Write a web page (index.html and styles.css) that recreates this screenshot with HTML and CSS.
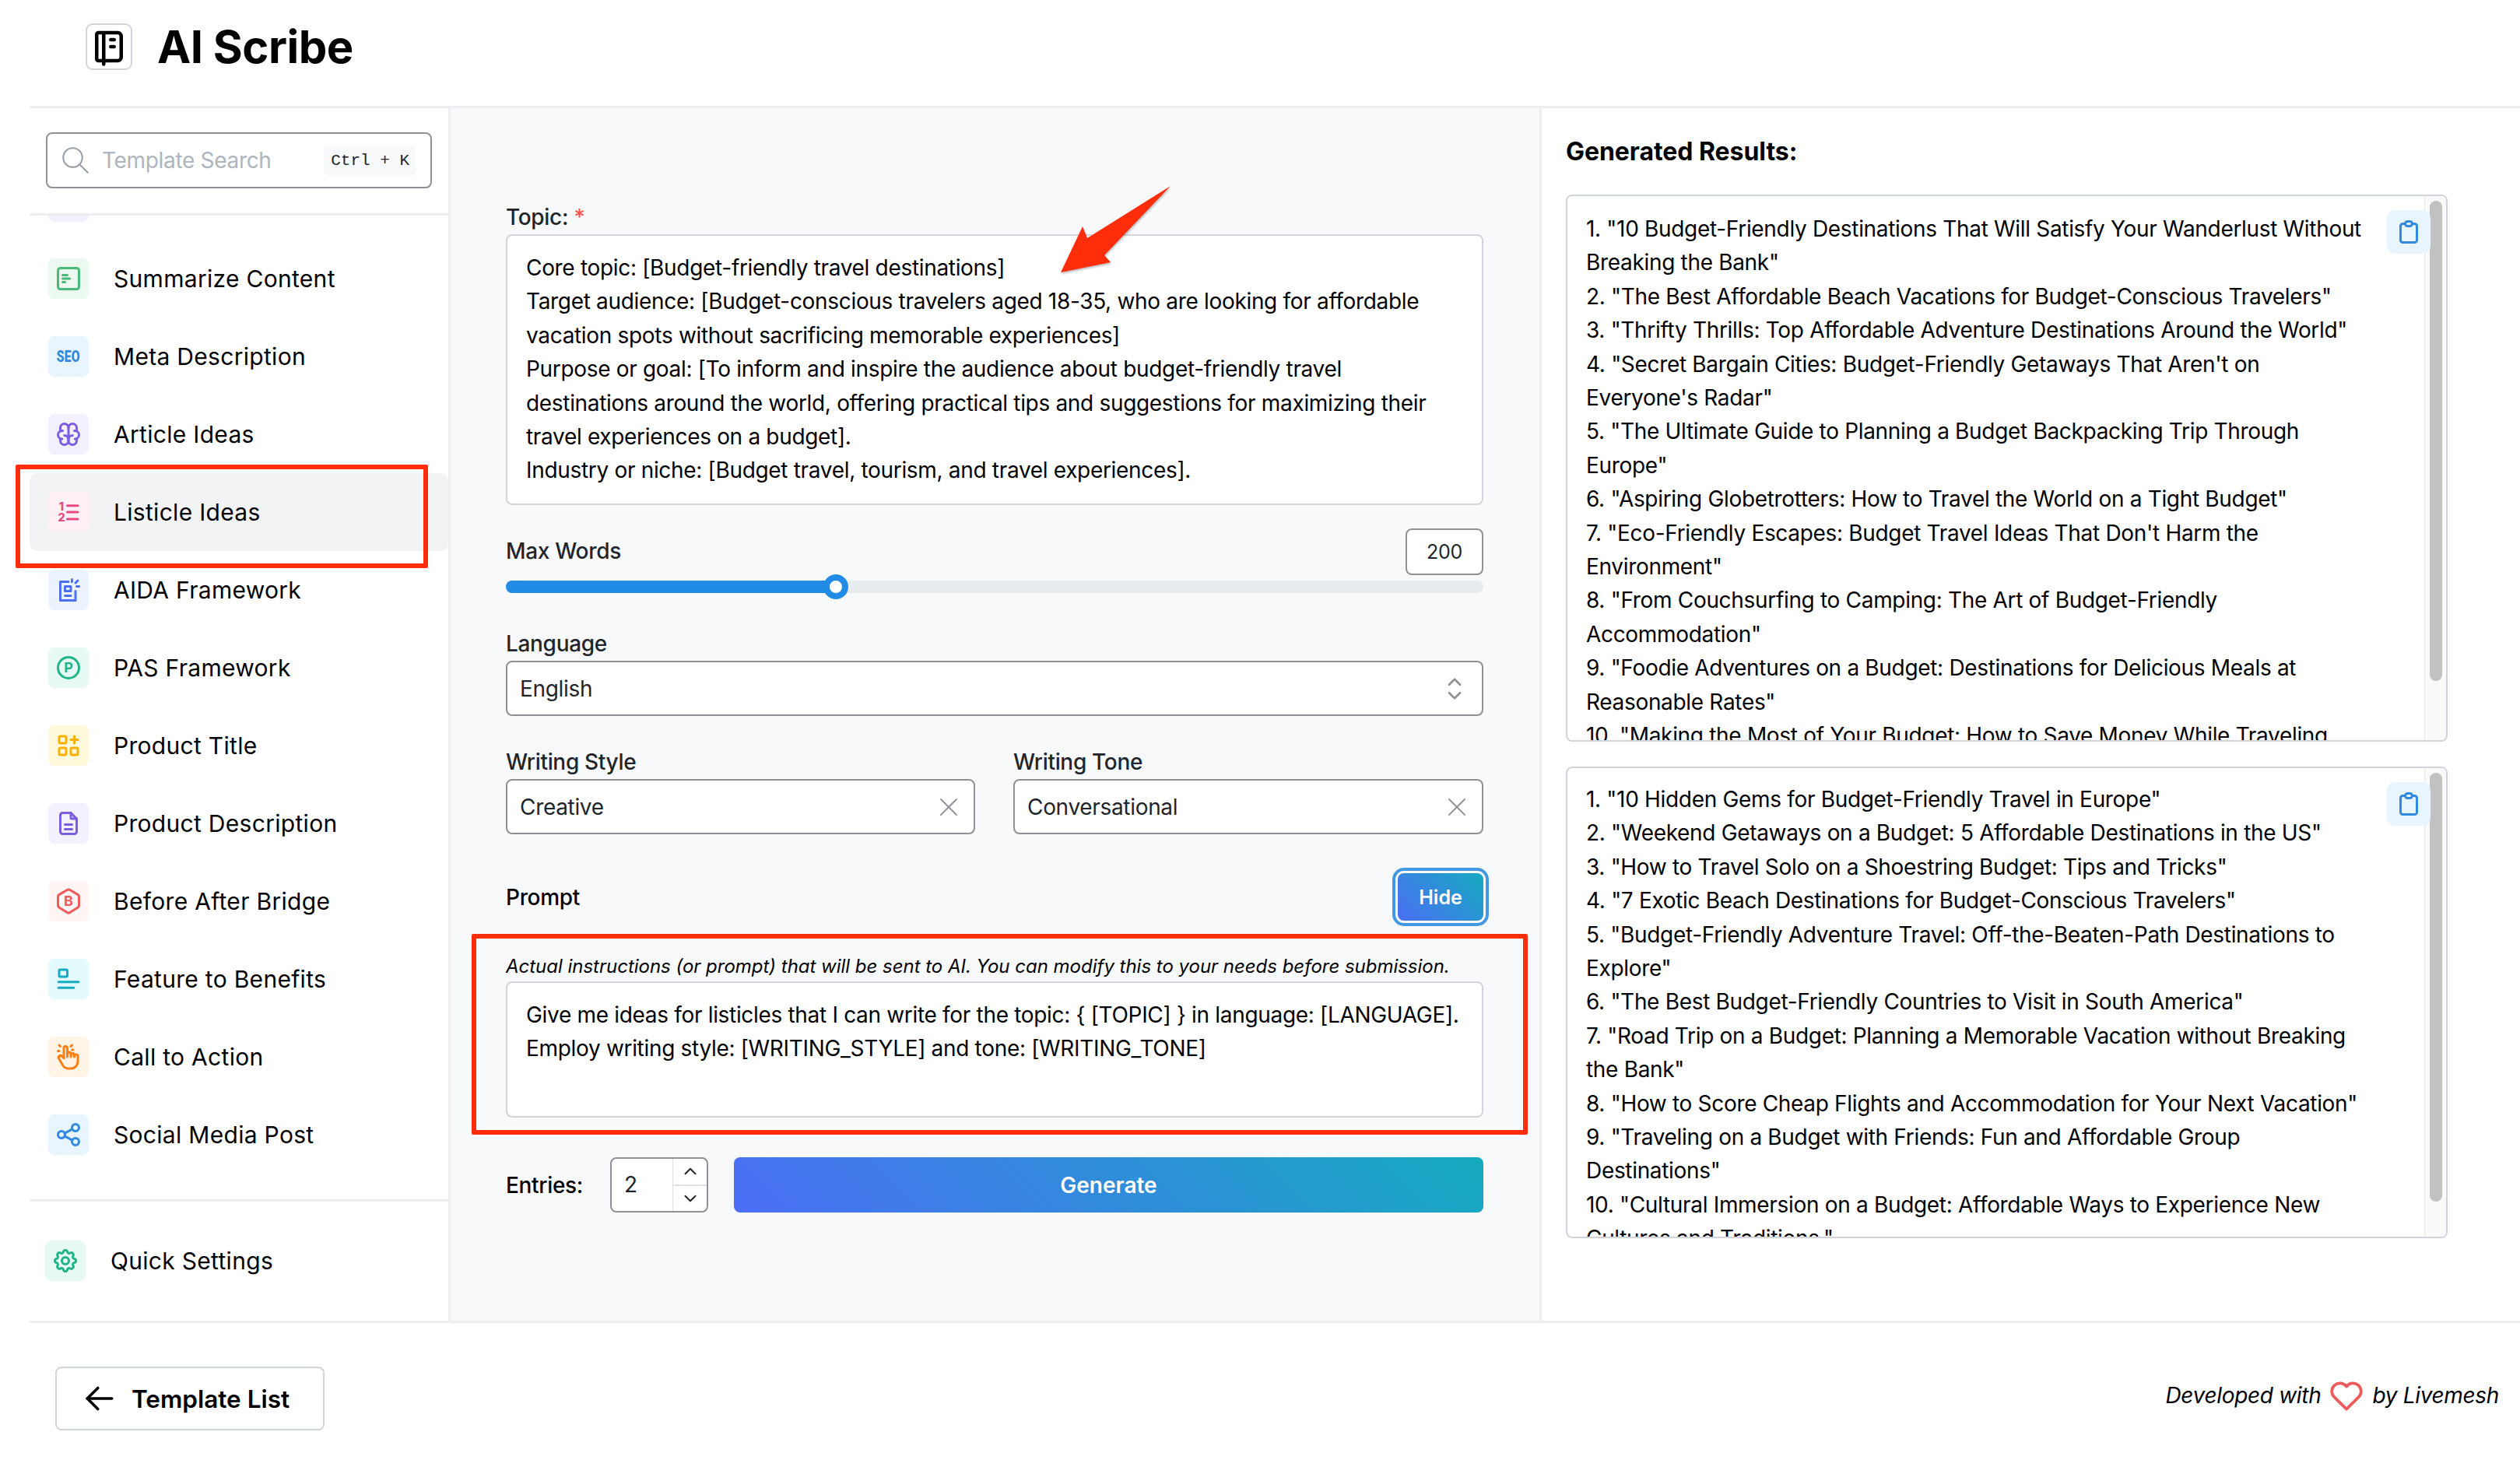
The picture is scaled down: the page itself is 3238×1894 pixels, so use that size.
FILE: index.html
```html
<!DOCTYPE html>
<html lang="en">
<head>
    <meta charset="UTF-8">
    <meta name="viewport" content="width=device-width, initial-scale=1.0">
    <title>AI Scribe</title>
    <link rel="stylesheet" href="styles.css">
</head>
<body>
    <div class="app">
        <header class="topbar">
            <div class="logo-box">
                <svg class="ico logo-ico" viewBox="0 0 24 24"><path d="M6 4h11a2 2 0 0 1 2 2v12a2 2 0 0 1 -2 2h-11a1 1 0 0 1 -1 -1v-14a1 1 0 0 1 1 -1m3 0v18"/><path d="M13 8h2"/><path d="M13 12h2"/></svg>
            </div>
            <h1>AI Scribe</h1>
        </header>

        <div class="content">
            <aside class="sidebar">
                <div class="search-wrap">
                    <div class="search">
                        <svg class="ico search-ico" viewBox="0 0 24 24"><circle cx="10" cy="10" r="7"/><path d="M21 21l-6 -6"/></svg>
                        <span class="search-text">Template Search</span>
                        <span class="kbd">Ctrl + K</span>
                    </div>
                </div>

                <nav class="nav-list">
                    <div class="peek"></div>
                    <a class="nav-item">
                        <span class="tile green"><svg class="ico" viewBox="0 0 24 24"><path d="M3 5a2 2 0 0 1 2 -2h14a2 2 0 0 1 2 2v14a2 2 0 0 1 -2 2h-14a2 2 0 0 1 -2 -2z"/><path d="M9 15h-2"/><path d="M13 12h-6"/><path d="M11 9h-4"/></svg></span>
                        Summarize Content
                    </a>
                    <a class="nav-item">
                        <span class="tile blue"><span class="seo">SEO</span></span>
                        Meta Description
                    </a>
                    <a class="nav-item">
                        <span class="tile purple"><svg class="ico" viewBox="0 0 24 24"><path d="M15.5 13a3.5 3.5 0 0 0 -3.5 3.5v1a3.5 3.5 0 0 0 7 0v-1.8"/><path d="M8.5 13a3.5 3.5 0 0 1 3.5 3.5v1a3.5 3.5 0 0 1 -7 0v-1.8"/><path d="M17.5 16a3.5 3.5 0 0 0 0 -7h-.5"/><path d="M19 9.3v-2.8a3.5 3.5 0 0 0 -7 0"/><path d="M6.5 16a3.5 3.5 0 0 1 0 -7h.5"/><path d="M5 9.3v-2.8a3.5 3.5 0 0 1 7 0v10"/></svg></span>
                        Article Ideas
                    </a>
                    <a class="nav-item active">
                        <span class="tile pink"><svg class="ico" viewBox="0 0 24 24"><path d="M11 6.5h9"/><path d="M11 12h9"/><path d="M11 18h9"/><text x="6" y="10.6" class="ico-letter small">1</text><text x="6" y="20" class="ico-letter small">2</text></svg></span>
                        Listicle Ideas
                    </a>
                    <a class="nav-item">
                        <span class="tile indigo"><svg class="ico" viewBox="0 0 24 24"><path d="M11.933 5h-6.933v16h13v-8"/><path d="M14 17h-5"/><path d="M9 13h5v-4h-5z"/><path d="M15 5v-2"/><path d="M18 6l2 -2"/><path d="M19 9h2"/></svg></span>
                        AIDA Framework
                    </a>
                    <a class="nav-item">
                        <span class="tile teal"><svg class="ico" viewBox="0 0 24 24"><circle cx="12" cy="12" r="9"/><text x="12" y="16.2" class="ico-letter">P</text></svg></span>
                        PAS Framework
                    </a>
                    <a class="nav-item">
                        <span class="tile yellow"><svg class="ico" viewBox="0 0 24 24"><path d="M4 5a1 1 0 0 1 1 -1h4a1 1 0 0 1 1 1v4a1 1 0 0 1 -1 1h-4a1 1 0 0 1 -1 -1z"/><path d="M4 15a1 1 0 0 1 1 -1h4a1 1 0 0 1 1 1v4a1 1 0 0 1 -1 1h-4a1 1 0 0 1 -1 -1z"/><path d="M14 15a1 1 0 0 1 1 -1h4a1 1 0 0 1 1 1v4a1 1 0 0 1 -1 1h-4a1 1 0 0 1 -1 -1z"/><path d="M14 7h6"/><path d="M17 4v6"/></svg></span>
                        Product Title
                    </a>
                    <a class="nav-item">
                        <span class="tile purple"><svg class="ico" viewBox="0 0 24 24"><path d="M14 3v4a1 1 0 0 0 1 1h4"/><path d="M17 21h-10a2 2 0 0 1 -2 -2v-14a2 2 0 0 1 2 -2h7l5 5v11a2 2 0 0 1 -2 2z"/><path d="M9 17h6"/><path d="M9 13h6"/></svg></span>
                        Product Description
                    </a>
                    <a class="nav-item">
                        <span class="tile red"><svg class="ico" viewBox="0 0 24 24"><path d="M19.875 6.27a2.225 2.225 0 0 1 1.125 1.948v7.284c0 .809 -.443 1.555 -1.158 1.948l-6.75 4.27a2.269 2.269 0 0 1 -2.184 0l-6.75 -4.27a2.225 2.225 0 0 1 -1.158 -1.948v-7.285c0 -.809 .443 -1.554 1.158 -1.947l6.75 -3.98a2.33 2.33 0 0 1 2.25 0l6.75 3.98h-.033z"/><text x="12" y="16.2" class="ico-letter">B</text></svg></span>
                        Before After Bridge
                    </a>
                    <a class="nav-item">
                        <span class="tile cyan"><svg class="ico" viewBox="0 0 24 24"><rect x="4" y="4" width="7" height="6" rx="1"/><path d="M3.5 14.5h17"/><path d="M3.5 19.5h13"/></svg></span>
                        Feature to Benefits
                    </a>
                    <a class="nav-item">
                        <span class="tile orange"><svg class="ico" viewBox="0 0 24 24"><path d="M8 13v-8.5a1.5 1.5 0 0 1 3 0v7.5"/><path d="M11 11.5v-2a1.5 1.5 0 0 1 3 0v2.5"/><path d="M14 10.5a1.5 1.5 0 0 1 3 0v1.5"/><path d="M17 11.5a1.5 1.5 0 0 1 3 0v4.5a6 6 0 0 1 -6 6h-2h.208a6 6 0 0 1 -5.012 -2.7l-.196 -.3c-.312 -.479 -1.407 -2.388 -3.286 -5.728a1.5 1.5 0 0 1 .536 -2.022a1.867 1.867 0 0 1 2.28 .28l1.47 1.47"/><path d="M5 3l-1 -1"/><path d="M4 7h-1"/><path d="M14 3l1 -1"/><path d="M15 6h1"/></svg></span>
                        Call to Action
                    </a>
                    <a class="nav-item">
                        <span class="tile blue"><svg class="ico" viewBox="0 0 24 24"><circle cx="6" cy="12" r="3"/><circle cx="18" cy="6" r="3"/><circle cx="18" cy="18" r="3"/><path d="M8.7 10.7l6.6 -3.4"/><path d="M8.7 13.3l6.6 3.4"/></svg></span>
                        Social Media Post
                    </a>
                </nav>

                <div class="quick">
                    <a class="nav-item quick-item">
                        <span class="tile teal"><svg class="ico" viewBox="0 0 24 24"><path d="M10.325 4.317c.426 -1.756 2.924 -1.756 3.35 0a1.724 1.724 0 0 0 2.573 1.066c1.543 -.94 3.31 .826 2.37 2.37a1.724 1.724 0 0 0 1.065 2.572c1.756 .426 1.756 2.924 0 3.35a1.724 1.724 0 0 0 -1.066 2.573c.94 1.543 -.826 3.31 -2.37 2.37a1.724 1.724 0 0 0 -2.572 1.065c-.426 1.756 -2.924 1.756 -3.35 0a1.724 1.724 0 0 0 -2.573 -1.066c-1.543 .94 -3.31 -.826 -2.37 -2.37a1.724 1.724 0 0 0 -1.065 -2.572c-1.756 -.426 -1.756 -2.924 0 -3.35a1.724 1.724 0 0 0 1.066 -2.573c-.94 -1.543 .826 -3.31 2.37 -2.37c1 .608 2.296 .07 2.572 -1.065z"/><circle cx="12" cy="12" r="3"/></svg></span>
                        Quick Settings
                    </a>
                </div>
            </aside>

            <main class="form-panel">
                <label class="label">Topic: <span class="req">*</span></label>
                <div class="textbox topic-box">Core topic: [Budget-friendly travel destinations]
Target audience: [Budget-conscious travelers aged 18-35, who are looking for affordable
vacation spots without sacrificing memorable experiences]
Purpose or goal: [To inform and inspire the audience about budget-friendly travel
destinations around the world, offering practical tips and suggestions for maximizing their
travel experiences on a budget].
Industry or niche: [Budget travel, tourism, and travel experiences].</div>

                <div class="words-row">
                    <label class="label">Max Words</label>
                    <div class="words-num">200</div>
                </div>
                <div class="slider">
                    <div class="slider-fill"></div>
                    <div class="slider-thumb"></div>
                </div>

                <label class="label language-label">Language</label>
                <div class="field">
                    English
                    <svg class="ico selector-ico" viewBox="0 0 24 24"><path d="M8 9l4 -4l4 4"/><path d="M16 15l-4 4l-4 -4"/></svg>
                </div>

                <div class="two-col">
                    <div>
                        <label class="label">Writing Style</label>
                        <div class="field">
                            Creative
                            <svg class="ico clear-ico" viewBox="0 0 24 24"><path d="M18 6l-12 12"/><path d="M6 6l12 12"/></svg>
                        </div>
                    </div>
                    <div>
                        <label class="label">Writing Tone</label>
                        <div class="field">
                            Conversational
                            <svg class="ico clear-ico" viewBox="0 0 24 24"><path d="M18 6l-12 12"/><path d="M6 6l12 12"/></svg>
                        </div>
                    </div>
                </div>

                <div class="prompt-row">
                    <label class="label prompt-label">Prompt</label>
                    <button class="hide-btn">Hide</button>
                </div>

                <p class="note">Actual instructions (or prompt) that will be sent to AI. You can modify this to your needs before submission.</p>
                <div class="textbox prompt-box">Give me ideas for listicles that I can write for the topic: { [TOPIC] } in language: [LANGUAGE].
Employ writing style: [WRITING_STYLE] and tone: [WRITING_TONE]</div>

                <div class="generate-row">
                    <label class="label entries-label">Entries:</label>
                    <div class="stepper">
                        <span class="stepper-val">2</span>
                        <div class="stepper-btns">
                            <span><svg class="ico" viewBox="0 0 24 24"><path d="M6 15l6 -6l6 6"/></svg></span>
                            <span><svg class="ico" viewBox="0 0 24 24"><path d="M6 9l6 6l6 -6"/></svg></span>
                        </div>
                    </div>
                    <button class="generate-btn">Generate</button>
                </div>
            </main>

            <section class="results">
                <h2>Generated Results:</h2>
                <div class="result-box box-one">
                    <div class="result-text">1. "10 Budget-Friendly Destinations That Will Satisfy Your Wanderlust Without
Breaking the Bank"
2. "The Best Affordable Beach Vacations for Budget-Conscious Travelers"
3. "Thrifty Thrills: Top Affordable Adventure Destinations Around the World"
4. "Secret Bargain Cities: Budget-Friendly Getaways That Aren't on
Everyone's Radar"
5. "The Ultimate Guide to Planning a Budget Backpacking Trip Through
Europe"
6. "Aspiring Globetrotters: How to Travel the World on a Tight Budget"
7. "Eco-Friendly Escapes: Budget Travel Ideas That Don't Harm the
Environment"
8. "From Couchsurfing to Camping: The Art of Budget-Friendly
Accommodation"
9. "Foodie Adventures on a Budget: Destinations for Delicious Meals at
Reasonable Rates"
10. "Making the Most of Your Budget: How to Save Money While Traveling</div>
                    <div class="scrollbar"><div class="scroll-thumb"></div></div>
                    <button class="copy-btn"><svg class="ico" viewBox="0 0 24 24"><path d="M9 5h-2a2 2 0 0 0 -2 2v12a2 2 0 0 0 2 2h10a2 2 0 0 0 2 -2v-12a2 2 0 0 0 -2 -2h-2"/><rect x="9" y="3" width="6" height="4" rx="2"/></svg></button>
                </div>
                <div class="result-box box-two">
                    <div class="result-text">1. "10 Hidden Gems for Budget-Friendly Travel in Europe"
2. "Weekend Getaways on a Budget: 5 Affordable Destinations in the US"
3. "How to Travel Solo on a Shoestring Budget: Tips and Tricks"
4. "7 Exotic Beach Destinations for Budget-Conscious Travelers"
5. "Budget-Friendly Adventure Travel: Off-the-Beaten-Path Destinations to
Explore"
6. "The Best Budget-Friendly Countries to Visit in South America"
7. "Road Trip on a Budget: Planning a Memorable Vacation without Breaking
the Bank"
8. "How to Score Cheap Flights and Accommodation for Your Next Vacation"
9. "Traveling on a Budget with Friends: Fun and Affordable Group
Destinations"
10. "Cultural Immersion on a Budget: Affordable Ways to Experience New
Cultures and Traditions."</div>
                    <div class="scrollbar"><div class="scroll-thumb"></div></div>
                    <button class="copy-btn"><svg class="ico" viewBox="0 0 24 24"><path d="M9 5h-2a2 2 0 0 0 -2 2v12a2 2 0 0 0 2 2h10a2 2 0 0 0 2 -2v-12a2 2 0 0 0 -2 -2h-2"/><rect x="9" y="3" width="6" height="4" rx="2"/></svg></button>
                </div>
            </section>
        </div>

        <footer class="footer">
            <button class="back-btn">
                <svg class="ico" viewBox="0 0 24 24"><path d="M5 12h14"/><path d="M5 12l6 6"/><path d="M5 12l6 -6"/></svg>
                Template List
            </button>
            <div class="credit">
                Developed with
                <svg class="ico" viewBox="0 0 24 24"><path d="M19.5 12.572l-7.5 7.428l-7.5 -7.428a5 5 0 1 1 7.5 -6.566a5 5 0 1 1 7.5 6.572"/></svg>
                by Livemesh
            </div>
        </footer>
    </div>

    <!-- red markup drawn on top of the screenshot -->
    <div class="mark mark-nav"></div>
    <div class="mark mark-prompt"></div>
    <svg class="mark-arrow" viewBox="1350 230 170 130"><polygon points="1363,350 1391,291 1397,306 1504,239 1419,328 1427,337"/></svg>
</body>
</html>
```

FILE: styles.css
```css
* {
    box-sizing: border-box;
    margin: 0;
    padding: 0;
}

body {
    font-family: Inter, "Noto Sans", sans-serif;
    font-size: 28px;
    letter-spacing: -0.32px;
    color: #000;
    background: #fff;
    height: 100vh;
    position: relative;
    overflow: hidden;
}

.ico {
    fill: none;
    stroke: currentColor;
    stroke-width: 2;
    stroke-linecap: round;
    stroke-linejoin: round;
}

.ico-letter {
    fill: currentColor;
    stroke: none;
    font-family: Inter, sans-serif;
    font-size: 12px;
    font-weight: 700;
    text-anchor: middle;
    letter-spacing: 0;
}

.ico-letter.small {
    font-size: 9.5px;
    font-weight: 800;
}

.app {
    height: 100%;
    margin-left: 38px;
    display: flex;
    flex-direction: column;
}

/* top bar */
.topbar {
    height: 139px;
    flex: none;
    padding: 0 0 17px 72px;
    display: flex;
    align-items: center;
    gap: 32px;
    border-bottom: 3px solid #eceef1;
}

.logo-box {
    width: 60px;
    height: 60px;
    border: 2px solid #d1d5db;
    border-radius: 9px;
    display: flex;
    align-items: center;
    justify-content: center;
}

.logo-ico {
    width: 54px;
    height: 54px;
    stroke-width: 2;
}

h1 {
    font-size: 58px;
    font-weight: 700;
    line-height: 1;
    letter-spacing: -0.5px;
}

.content {
    flex: 1;
    display: flex;
    min-height: 0;
}

/* sidebar */
.sidebar {
    width: 541px;
    flex: none;
    border-right: 3px solid #eceef1;
    display: flex;
    flex-direction: column;
}

.search-wrap {
    height: 138px;
    flex: none;
    padding: 31px 21px 0 21px;
    border-bottom: 3px solid #eceef1;
}

.search {
    height: 72px;
    border: 2px solid #8f9196;
    border-radius: 8px;
    padding: 0 18px 0 15px;
    display: flex;
    align-items: center;
    color: #adb5bd;
}

.search-ico {
    width: 42px;
    height: 42px;
    stroke-width: 1.2;
    flex: none;
    margin-right: 13px;
    color: #9aa0a8;
}

.search-text {
    flex: 1;
}

.kbd {
    height: 38px;
    padding: 0 9px;
    background: #f8f9fa;
    border-radius: 6px;
    display: flex;
    align-items: center;
    color: #212529;
    font-family: "Liberation Mono", monospace;
    font-size: 21px;
    letter-spacing: 0;
}

.nav-list {
    flex: none;
    height: 1264px;
    overflow: hidden;
}

.peek {
    width: 52px;
    height: 8px;
    margin: 0 0 23px 24px;
    background: #f3f0ff;
    border-radius: 0 0 10px 10px;
}

.nav-item {
    height: 100px;
    padding-left: 24px;
    display: flex;
    align-items: center;
    gap: 32px;
    border-radius: 10px;
    font-size: 30px;
    letter-spacing: 0.3px;
}

.nav-item.active {
    background: #f2f3f5;
}

.tile {
    width: 52px;
    height: 52px;
    flex: none;
    border-radius: 8px;
    display: flex;
    align-items: center;
    justify-content: center;
}

.tile svg {
    width: 36px;
    height: 36px;
}

.green { background: #ebf9f0; color: #48bb78; }
.blue { background: #e8f4fe; color: #2f8ae0; }
.purple { background: #f3f0ff; color: #7c5ce0; }
.pink { background: #fff0f6; color: #e64980; }
.indigo { background: #edf2ff; color: #4c6ef5; }
.teal { background: #e6faf3; color: #1fb585; }
.yellow { background: #fff9db; color: #fab005; }
.red { background: #fff5f5; color: #f05a5a; }
.cyan { background: #e3fafc; color: #15aabf; }
.orange { background: #fff4e6; color: #fd7e14; }

.seo {
    font-family: Roboto, sans-serif;
    font-size: 20px;
    font-weight: 900;
    letter-spacing: 0;
    transform: scaleX(0.8);
}

.quick {
    flex: 1;
    border-top: 3px solid #eceef1;
    padding-bottom: 2px;
    display: flex;
    align-items: center;
}

.quick-item {
    padding-left: 20px;
}

/* form column */
.form-panel {
    width: 1402px;
    flex: none;
    padding: 122px 72px 0 71px;
    background: #f8f9fb;
    border-right: 3px solid #eceef1;
}

.label {
    display: block;
    height: 36px;
    line-height: 36px;
    margin-bottom: 4px;
    font-weight: 500;
    color: #212529;
    white-space: nowrap;
}

.req {
    color: #fa5252;
}

.textbox {
    background: #fff;
    border: 2px solid #d1d5db;
    border-radius: 8px;
    padding: 20px 24px;
    line-height: 43.4px;
    white-space: pre;
}

.topic-box {
    height: 348px;
}

.words-row {
    margin-top: 30px;
    display: flex;
    justify-content: space-between;
    align-items: flex-end;
}

.words-row .label {
    margin-bottom: 13px;
}

.words-num {
    width: 100px;
    height: 60px;
    background: #fff;
    border: 2px solid #8f9196;
    border-radius: 8px;
    font-size: 25px;
    color: #212529;
    display: flex;
    align-items: center;
    justify-content: center;
}

.slider {
    position: relative;
    height: 16px;
    margin-top: 7px;
    background: #e9ecef;
    border-radius: 8px;
}

.slider-fill {
    width: 425px;
    height: 100%;
    background: #228be6;
    border-radius: 8px 0 0 8px;
}

.slider-thumb {
    position: absolute;
    left: 408px;
    top: -8px;
    width: 32px;
    height: 32px;
    background: #fff;
    border: 8px solid #228be6;
    border-radius: 50%;
}

.language-label {
    margin-top: 47px;
}

.field {
    height: 71px;
    background: #fff;
    border: 2px solid #8f9196;
    border-radius: 8px;
    padding: 0 12px 0 16px;
    display: flex;
    align-items: center;
    justify-content: space-between;
    color: #212529;
}

.selector-ico {
    width: 42px;
    height: 42px;
    stroke-width: 1.5;
    color: #8f9196;
    margin-right: 2px;
}

.clear-ico {
    width: 40px;
    height: 40px;
    stroke-width: 1.1;
    color: #8f9196;
}

.two-col {
    margin-top: 41px;
    display: grid;
    grid-template-columns: 603px 604px;
    gap: 49px;
}

.prompt-row {
    margin-top: 50px;
    height: 61px;
    display: flex;
    justify-content: space-between;
    align-items: center;
}

.prompt-label {
    margin: 0;
    color: #000;
}

.hide-btn {
    width: 110px;
    height: 61px;
    border: none;
    border-radius: 8px;
    background: linear-gradient(45deg, #4c6ef5, #15aabf);
    color: #fff;
    font: 600 25px Inter, sans-serif;
    outline: 4px solid #4299e1;
    outline-offset: 3px;
}

.note {
    margin-top: 41px;
    height: 36px;
    line-height: 36px;
    font-size: 24px;
    font-style: italic;
    letter-spacing: -0.02px;
    white-space: nowrap;
}

.prompt-box {
    height: 175px;
    margin-top: 1px;
}

.generate-row {
    margin-top: 51px;
    display: flex;
    align-items: center;
}

.entries-label {
    width: 134px;
    margin: 0;
    color: #000;
}

.stepper {
    width: 126px;
    height: 71px;
    margin-right: 33px;
    background: #fff;
    border: 2px solid #8f9196;
    border-radius: 8px;
    display: flex;
    font-size: 28px;
    color: #212529;
}

.stepper-val {
    width: 78px;
    padding-left: 16px;
    line-height: 67px;
}

.stepper-btns {
    flex: 1;
    border-left: 1px solid #dee2e6;
    display: flex;
    flex-direction: column;
}

.stepper-btns span {
    flex: 1;
    display: flex;
    align-items: center;
    justify-content: center;
}

.stepper-btns span:first-child {
    border-bottom: 2px solid #dee2e6;
}

.stepper-btns svg {
    width: 26px;
    height: 26px;
    stroke-width: 1.8;
}

.generate-btn {
    flex: 1;
    height: 71px;
    border: none;
    border-radius: 8px;
    background: linear-gradient(45deg, #4c6ef5, #15aabf);
    color: #fff;
    font: 600 28px Inter, sans-serif;
}

/* results column */
.results {
    flex: 1;
    padding: 36px 0 0 31px;
}

h2 {
    height: 40px;
    line-height: 40px;
    font-size: 32px;
    font-weight: 700;
    letter-spacing: -0.05px;
    margin-bottom: 35px;
}

.result-box {
    position: relative;
    width: 1133px;
    border: 2px solid #d1d5db;
    border-radius: 8px;
    overflow: hidden;
    display: flex;
}

.box-one {
    height: 703px;
    margin-bottom: 32px;
}

.box-two {
    height: 606px;
}

.result-text {
    flex: 1;
    padding: 21px 24px 0;
    line-height: 43.4px;
    white-space: pre;
    overflow: hidden;
}

.box-two .result-text {
    padding-top: 19px;
}

.scrollbar {
    width: 28px;
    flex: none;
    padding: 6px 5px 0 6px;
    background: #fafafa;
    border-left: 1px solid #e8e8e8;
}

.scroll-thumb {
    height: 617px;
    background: #c1c1c1;
    border-radius: 8px;
}

.box-two .scroll-thumb {
    height: 551px;
}

.copy-btn {
    position: absolute;
    top: 18px;
    right: 20px;
    width: 56px;
    height: 56px;
    border: none;
    border-radius: 10px;
    background: #e8f4fe;
    color: #2f8ae0;
    display: flex;
    align-items: center;
    justify-content: center;
}

.copy-btn svg {
    width: 36px;
    height: 36px;
}

/* footer */
.footer {
    height: 197px;
    flex: none;
    border-top: 3px solid #eceef1;
    padding: 0 27px 0 33px;
    display: flex;
    align-items: center;
    justify-content: space-between;
}

.back-btn {
    width: 346px;
    height: 82px;
    background: #fff;
    border: 2px solid #d1d5db;
    border-radius: 8px;
    padding-left: 28px;
    display: flex;
    align-items: center;
    gap: 14px;
    color: #000;
    font: 600 31.5px Inter, sans-serif;
}

.back-btn svg {
    width: 54px;
    height: 54px;
    stroke-width: 1.6;
    flex: none;
}

.credit {
    display: flex;
    align-items: center;
    gap: 8px;
    margin-bottom: 8px;
    font-style: italic;
    font-size: 28px;
}

.credit svg {
    width: 50px;
    height: 50px;
    margin-top: 2px;
    color: #f05a5a;
    stroke-width: 1.8;
}

/* annotations */
.mark {
    position: absolute;
    border: 6px solid #ff2d0a;
    border-radius: 2px;
}

.mark-nav {
    left: 20px;
    top: 597px;
    width: 530px;
    height: 133px;
}

.mark-prompt {
    left: 606px;
    top: 1200px;
    width: 1357px;
    height: 258px;
}

.mark-arrow {
    position: absolute;
    left: 1350px;
    top: 230px;
    width: 170px;
    height: 130px;
    fill: #ff2d0a;
    filter: drop-shadow(1px 2px 1px rgba(0, 0, 0, 0.25));
}
```
